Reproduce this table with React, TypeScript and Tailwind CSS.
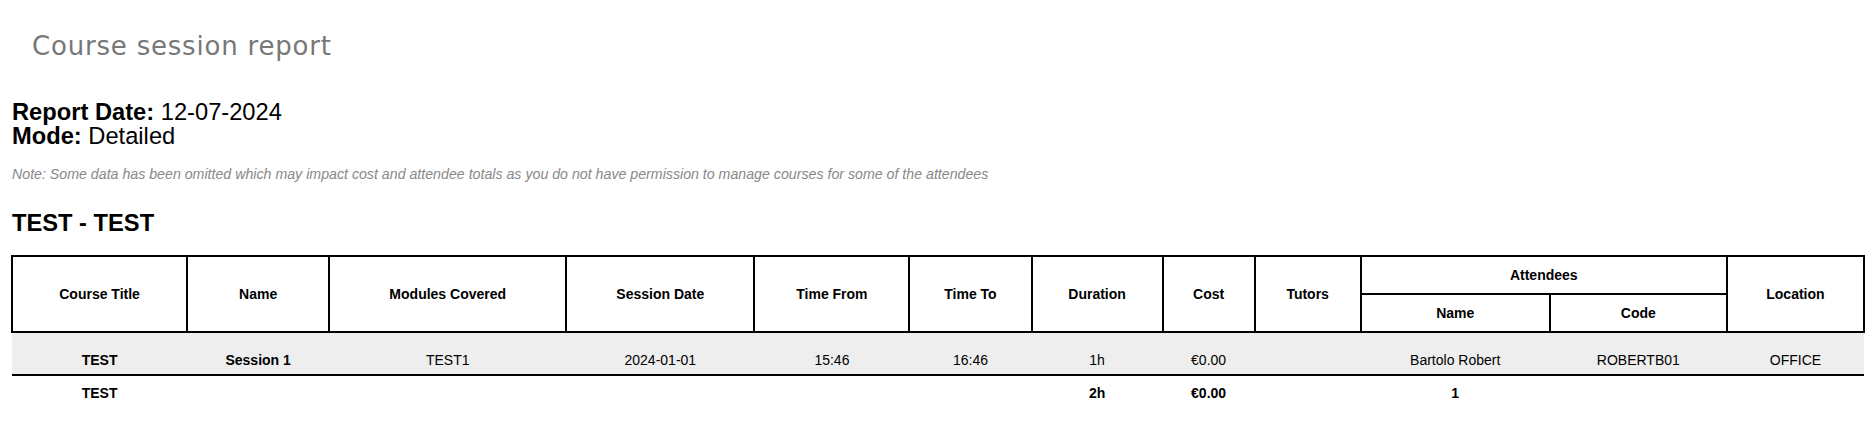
const columns = [
  "w-[175px]",
  "w-[142px]",
  "w-[237px]",
  "w-[188px]",
  "w-[155px]",
  "w-[122px]",
  "w-[131px]",
  "w-[92px]",
  "w-[106px]",
  "w-[189px]",
  "w-[177px]",
  "w-[137px]",
];

const th = "border-2 border-black text-center text-[14px] font-bold";
const td = "pt-[17px] align-top";
const total = "pt-[7px] align-top";

export default function App() {
  return (
    <div className="min-h-[426px] bg-white px-[11px] font-['Liberation_Sans',Arial,sans-serif] text-black">
      <h1 className="ml-[21px] pt-[31px] font-['DejaVu_Sans',sans-serif] text-[26px] font-normal leading-[30px] tracking-[0.8px] text-[#777]">
        Course session report
      </h1>

      <div className="mt-[39px] pl-px text-[23.7px] leading-[24px]">
        <div>
          <span className="font-bold">Report Date:</span> 12-07-2024
        </div>
        <div>
          <span className="font-bold">Mode:</span> Detailed
        </div>
      </div>

      <p className="mt-[16px] pl-px text-[14.2px] italic leading-[20px] text-[#888]">
        Note: Some data has been omitted which may impact cost and attendee
        totals as you do not have permission to manage courses for some of the
        attendees
      </p>

      <h2 className="mt-[25px] pl-px text-[23.7px] font-bold leading-[28px]">
        TEST - TEST
      </h2>

      <table className="mt-[18px] w-[1854px] table-fixed border-collapse">
        <colgroup>
          {columns.map((c, i) => (
            <col key={i} className={c} />
          ))}
        </colgroup>
        <thead>
          <tr className="h-[38px]">
            <th rowSpan={2} className={th}>Course Title</th>
            <th rowSpan={2} className={th}>Name</th>
            <th rowSpan={2} className={th}>Modules Covered</th>
            <th rowSpan={2} className={th}>Session Date</th>
            <th rowSpan={2} className={th}>Time From</th>
            <th rowSpan={2} className={th}>Time To</th>
            <th rowSpan={2} className={th}>Duration</th>
            <th rowSpan={2} className={th}>Cost</th>
            <th rowSpan={2} className={th}>Tutors</th>
            <th colSpan={2} className={th}>Attendees</th>
            <th rowSpan={2} className={th}>Location</th>
          </tr>
          <tr className="h-[38px]">
            <th className={th}>Name</th>
            <th className={th}>Code</th>
          </tr>
        </thead>
        <tbody className="text-center text-[14px]">
          <tr className="h-[43px] border-b-2 border-black bg-[#eee]">
            <td className={`${td} font-bold`}>TEST</td>
            <td className={`${td} font-bold`}>Session 1</td>
            <td className={td}>TEST1</td>
            <td className={td}>2024-01-01</td>
            <td className={td}>15:46</td>
            <td className={td}>16:46</td>
            <td className={td}>1h</td>
            <td className={td}>€0.00</td>
            <td className={td}></td>
            <td className={td}>Bartolo Robert</td>
            <td className={td}>ROBERTB01</td>
            <td className={td}>OFFICE</td>
          </tr>
          <tr className="h-[32px] font-bold">
            <td className={total}>TEST</td>
            <td className={total}></td>
            <td className={total}></td>
            <td className={total}></td>
            <td className={total}></td>
            <td className={total}></td>
            <td className={total}>2h</td>
            <td className={total}>€0.00</td>
            <td className={total}></td>
            <td className={total}>1</td>
            <td className={total}></td>
            <td className={total}></td>
          </tr>
        </tbody>
      </table>
    </div>
  );
}
